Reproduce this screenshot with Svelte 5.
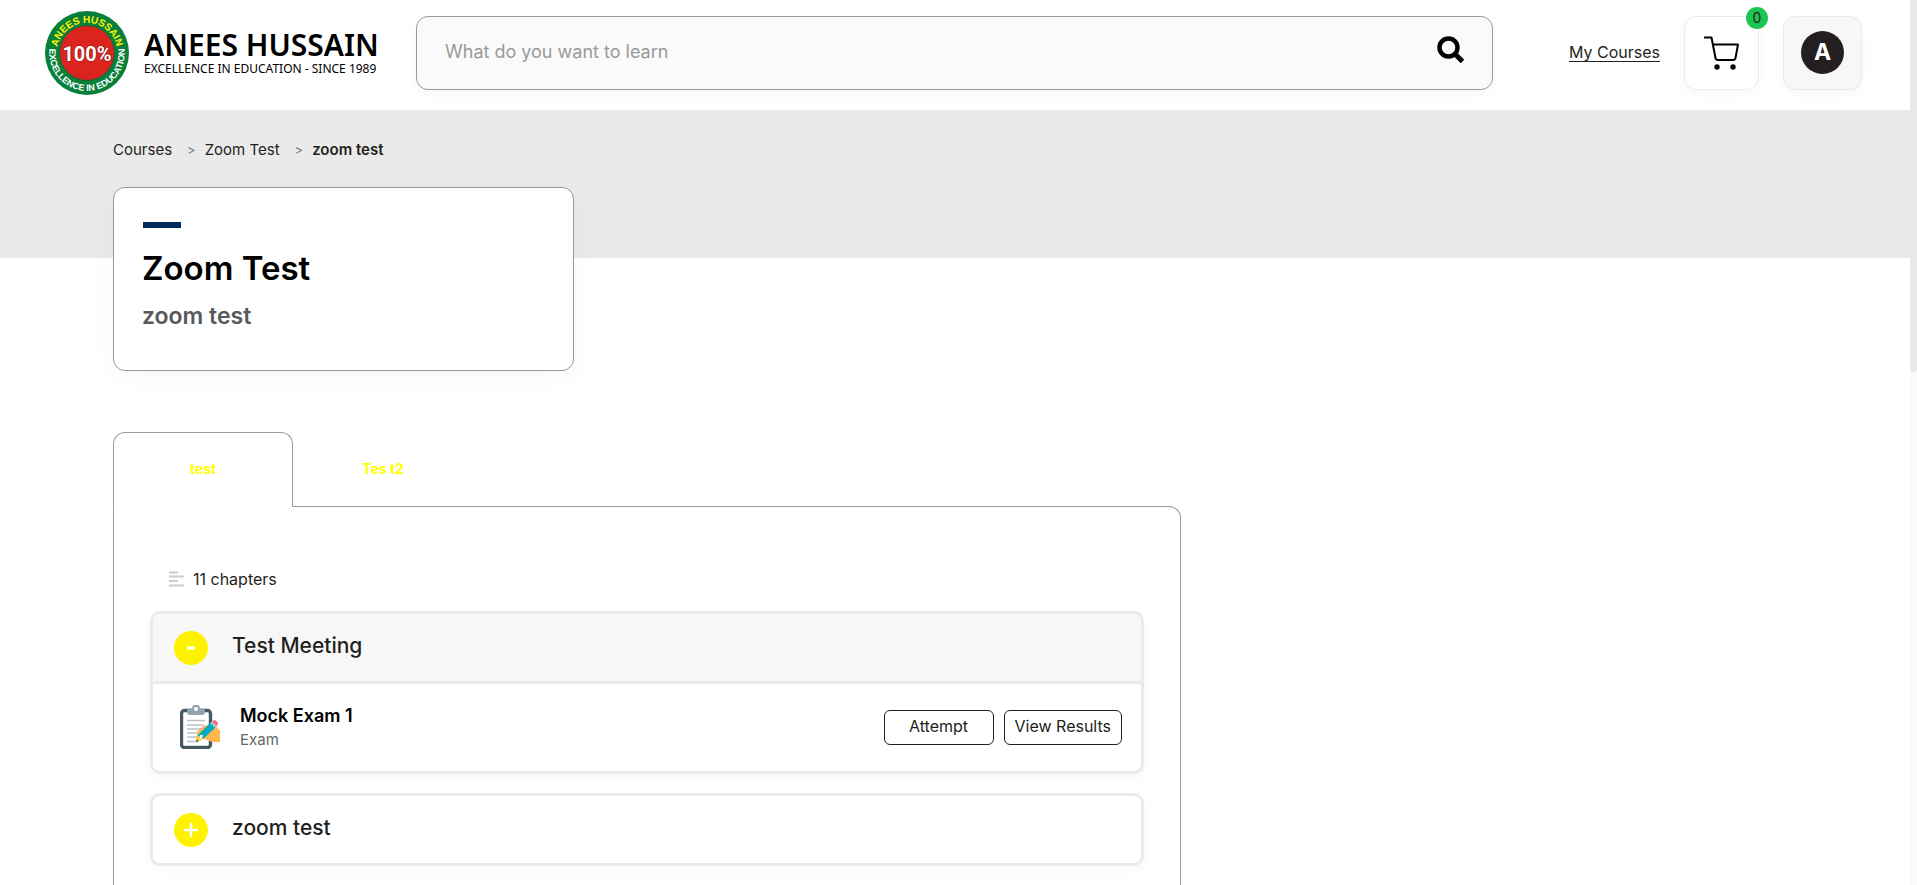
<script>
  let search = '';
  let cartCount = 0;
  let activeTab = 0;

  const tabs = ['test', 'Tes t2'];

  let chapters = [
    {
      title: 'Test Meeting',
      open: true,
      items: [{ name: 'Mock Exam 1', type: 'Exam' }]
    },
    { title: 'zoom test', open: false, items: [] }
  ];

  function toggleChapter(index) {
    chapters[index].open = !chapters[index].open;
  }
</script>

<div class="page">
  <header class="topbar">
    <a class="logo" href="/" aria-label="Anees Hussain home">
      <svg class="badge-logo" viewBox="0 0 84 84" aria-hidden="true">
        <defs>
          <path id="arc-top" d="M 12.8 49.8 A 30.2 30.2 0 1 1 71.2 49.8" />
          <path id="arc-bottom" d="M 5.2 34 A 37.7 37.7 0 1 0 78.8 34" />
        </defs>
        <circle cx="42" cy="42" r="42" fill="#08803a" />
        <circle cx="42" cy="42" r="27.5" fill="#dc241f" stroke="#0c6b33" />
        <text class="ring yellow"><textPath href="#arc-top" startOffset="50%" text-anchor="middle">ANEES HUSSAIN</textPath></text>
        <text class="ring white"><textPath href="#arc-bottom" startOffset="50%" text-anchor="middle">EXCELLENCE IN EDUCATION</textPath></text>
        <text class="percent" x="42" y="50" text-anchor="middle">100%</text>
      </svg>
      <span class="brand">
        <span class="brand-name">ANEES HUSSAIN</span>
        <span class="brand-line">EXCELLENCE IN EDUCATION - SINCE 1989</span>
      </span>
    </a>

    <form class="search" role="search" on:submit|preventDefault>
      <input type="text" placeholder="What do you want to learn" aria-label="Search courses" bind:value={search} />
      <button type="submit" aria-label="Search">
        <svg width="28" height="28" viewBox="0 0 28 28" fill="none" stroke="#000">
          <circle cx="12.5" cy="11.5" r="9" stroke-width="4.4" />
          <path d="M19 18 L26.5 25.5" stroke-width="5" />
        </svg>
      </button>
    </form>

    <nav class="actions">
      <a class="my-courses" href="/my-courses">My Courses</a>
      <a class="box cart" href="/cart" aria-label="Cart">
        <svg width="36" height="34" viewBox="0 0 36 34" fill="none" stroke="#000" stroke-width="2" stroke-linejoin="round">
          <path d="M0 1.5 H7.5 L11.5 22 Q12 24 14 24 H29 Q31 24 31.5 22 L34 8.5 H9" />
          <circle cx="13" cy="31" r="2.7" fill="#000" stroke="none" />
          <circle cx="29" cy="31" r="2.7" fill="#000" stroke="none" />
        </svg>
        <span class="count">{cartCount}</span>
      </a>
      <button class="box profile" aria-label="Profile menu"><span class="avatar">A</span></button>
    </nav>
  </header>

  <div class="hero">
    <nav class="breadcrumb" aria-label="Breadcrumb">
      <a href="/courses">Courses</a>
      <span class="sep">&gt;</span>
      <a href="/courses/zoom-test">Zoom Test</a>
      <span class="sep">&gt;</span>
      <strong>zoom test</strong>
    </nav>
  </div>

  <main>
    <section class="course-card">
      <div class="accent"></div>
      <h1>Zoom Test</h1>
      <h2>zoom test</h2>
    </section>

    <section class="course">
      <div class="tabs" role="tablist">
        {#each tabs as tab, i}
          <button role="tab" class="tab" class:active={activeTab === i} aria-selected={activeTab === i} on:click={() => (activeTab = i)}>{tab}</button>
        {/each}
      </div>

      <div class="panel">
        <p class="summary">
          <svg width="16" height="16" viewBox="0 0 16 16" stroke="#ccc" stroke-width="2" aria-hidden="true">
            <path d="M1 1.5 H10 M1 5.5 H16 M1 10 H10 M1 14.5 H16" />
          </svg>
          11 chapters
        </p>

        {#each chapters as chapter, index}
          <div class="chapter" class:open={chapter.open}>
            <button class="chapter-head" aria-expanded={chapter.open} on:click={() => toggleChapter(index)}>
              <span class="toggle">
                <svg width="14" height="14" viewBox="0 0 14 14" stroke="#fff" aria-hidden="true">
                  {#if chapter.open}
                    <path d="M3 7 H11" stroke-width="3" />
                  {:else}
                    <path d="M0 7 H14 M7 0 V14" stroke-width="2.4" />
                  {/if}
                </svg>
              </span>
              <span class="chapter-title">{chapter.title}</span>
            </button>
            {#if chapter.open}
              {#each chapter.items as item}
                <div class="lesson">
                  <svg class="exam-icon" width="40" height="44" viewBox="0 0 40 44" aria-hidden="true">
                    <rect x="1.5" y="5.5" width="29" height="37" rx="3" fill="#fff" stroke="#455a64" stroke-width="3.4" />
                    <path d="M7 3.5 H12 A4 4 0 0 1 20 3.5 H25 V7 Q25 10 22 10 H10 Q7 10 7 7 Z" fill="#90a4ae" />
                    <circle cx="16" cy="4" r="2" fill="#fff" />
                    <path d="M7 15.5 H25 M7 20 H24 M7 24 H22 M7 28 H20 M7 32 H18 M7 36.5 H18" stroke="#c0c0c0" stroke-width="1.7" />
                    <path d="M17 27 L24 20.5 H33 L36 21 L40 26 V37 H32 L22 33 L18 34 Z" fill="#ffb74d" />
                    <path d="M17 31 L30 18 L35.5 22.5 L23 34 Z" fill="#00acc1" />
                    <path d="M17 30.5 L23 33 L20 36 L16 37 Z" fill="#fbc02d" />
                    <path d="M16 37 L16.8 34.5 L18.5 36.3 Z" fill="#37474f" />
                    <path d="M20 30 H23 L22 33 L19 35 Z" fill="#fff3cd" />
                    <path d="M30 18 L32 16.5 L36.8 21 L35 22.8 Z" fill="#b0bec5" />
                    <path d="M32 16.5 L34 15 Q35 14.8 36 15.8 L37.8 17.8 Q38.4 19 37.5 20 L36.5 21 Z" fill="#ef6f7c" />
                  </svg>
                  <div class="lesson-text">
                    <h3>{item.name}</h3>
                    <p>{item.type}</p>
                  </div>
                  <div class="lesson-actions">
                    <button>Attempt</button>
                    <button>View Results</button>
                  </div>
                </div>
              {/each}
            {/if}
          </div>
        {/each}
      </div>
    </section>
  </main>

  <div class="scroll-track" aria-hidden="true"><div class="scroll-thumb"></div></div>
</div>

<style>
  :global(body) {
    background: #fff;
  }

  .page {
    min-height: 100vh;
    box-sizing: border-box;
    padding-right: 7px;
    font-family: Inter, "Liberation Sans", sans-serif;
    color: #231f20;
    display: flex;
    flex-direction: column;
  }

  .page :global(*) {
    box-sizing: border-box;
  }

  button,
  input {
    font: inherit;
    color: inherit;
  }

  button {
    cursor: pointer;
  }

  a {
    color: inherit;
    text-decoration: none;
  }

  h1,
  h2,
  h3,
  p {
    margin: 0;
  }

  .topbar {
    display: flex;
    align-items: center;
    height: 110px;
    padding: 0 48px 4px 45px;
    background: #fff;
  }

  .logo {
    display: flex;
    align-items: center;
    gap: 15px;
    width: 371px;
    flex: none;
    color: #000;
  }

  .badge-logo {
    width: 84px;
    height: 84px;
    flex: none;
  }

  .ring {
    font: bold 9px "Liberation Sans", sans-serif;
  }

  .yellow {
    fill: #fff200;
    font-size: 10px;
  }

  .white {
    fill: #fff;
  }

  .percent {
    font: bold 20px Roboto, sans-serif;
    fill: #fff;
    stroke: #7d1411;
    stroke-width: 1px;
    paint-order: stroke;
  }

  .brand {
    display: flex;
    flex-direction: column;
    white-space: nowrap;
  }

  .brand-name {
    font: 600 30px/32px "Noto Sans", sans-serif;
  }

  .brand-line {
    font: 12px/16px "Noto Sans", sans-serif;
  }

  .search {
    flex: 1;
    display: flex;
    align-items: center;
    height: 74px;
    padding: 0 28px;
    border: 1px solid #999;
    border-radius: 12px;
    background: #fafafa;
    box-shadow: 0 4px 12px rgba(0, 0, 0, 0.03);
  }

  .search input {
    flex: 1;
    min-width: 0;
    padding: 0 0 2px;
    border: 0;
    outline: 0;
    background: none;
    font-size: 18px;
    line-height: 24px;
  }

  .search input::placeholder {
    color: #999;
    opacity: 1;
  }

  .search button {
    display: flex;
    padding: 0 0 6px;
    border: 0;
    background: none;
  }

  .actions {
    display: flex;
    align-items: center;
    margin-left: 76px;
  }

  .my-courses {
    padding-bottom: 2px;
    font-size: 16px;
    line-height: 24px;
    text-decoration: underline;
    text-underline-offset: 3px;
    white-space: nowrap;
    margin-right: 24px;
  }

  .box {
    display: flex;
    align-items: center;
    justify-content: center;
    height: 74px;
    border: 1px solid #eaeaea;
    border-radius: 12px;
    box-shadow: 0 4px 12px rgba(0, 0, 0, 0.03);
  }

  .cart {
    position: relative;
    width: 75px;
    margin-right: 24px;
  }

  .count {
    position: absolute;
    top: -10px;
    right: -10px;
    width: 22px;
    height: 22px;
    border-radius: 50%;
    background: #1bc553;
    font-size: 14px;
    line-height: 22px;
    text-align: center;
  }

  .profile {
    width: 79px;
    padding: 0 0 2px;
    background: #f7f7f7;
  }

  .avatar {
    width: 43px;
    height: 43px;
    border-radius: 50%;
    background: #231f20;
    color: #fff;
    font-size: 23px;
    font-weight: 700;
    line-height: 43px;
  }

  .hero {
    height: 148px;
    padding: 28px 113px 0;
    background: #eaeaea;
  }

  .breadcrumb {
    display: flex;
    font-size: 15px;
    line-height: 24px;
  }

  .breadcrumb .sep {
    margin: 0 9px 0 15px;
    color: #6c757d;
    font-size: 13px;
  }

  .breadcrumb strong {
    font-weight: 600;
  }

  main {
    flex: 1;
    display: flex;
    flex-direction: column;
    padding: 0 113px;
    margin-top: -71px;
  }

  .course-card {
    width: 100%;
    max-width: 461px;
    height: 184px;
    padding: 34px 28px;
    border: 1px solid #999;
    border-radius: 12px;
    background: #fff;
    box-shadow: 0 4px 24px rgba(0, 0, 0, 0.04);
  }

  .accent {
    width: 38px;
    height: 6px;
    margin-left: 1px;
    background: #002b5c;
  }

  h1 {
    margin-top: 16px;
    color: #000;
    font-size: 33px;
    font-weight: 600;
    line-height: 48px;
  }

  h2 {
    margin-top: 8px;
    color: #58595b;
    font-size: 23px;
    font-weight: 600;
    line-height: 32px;
  }

  .course {
    flex: 1;
    display: flex;
    flex-direction: column;
    width: 100%;
    max-width: 1068px;
    margin-top: 61px;
  }

  .tabs {
    display: flex;
  }

  .tab {
    width: 180px;
    height: 75px;
    margin-bottom: -1px;
    padding: 0 0 2px;
    border: 1px solid transparent;
    border-radius: 12px 12px 0 0;
    background: none;
    color: #ff0;
    font-size: 14px;
    font-weight: 700;
  }

  .tab.active {
    border-color: #999;
    border-bottom-color: #fff;
    background: #fff;
    z-index: 1;
  }

  .panel {
    flex: 1;
    padding: 60px 36px 18px;
    border: 1px solid #999;
    border-bottom: 0;
    border-top-right-radius: 12px;
  }

  .summary {
    display: flex;
    align-items: center;
    gap: 9px;
    margin: 0 0 20px 18px;
    font-size: 16px;
    line-height: 24px;
  }

  .chapter {
    margin-bottom: 19px;
    border: 3px solid #eaeaea;
    border-radius: 10px;
    background: #fff;
    box-shadow: 0 4px 12px rgba(0, 0, 0, 0.03);
    overflow: hidden;
  }

  .chapter:last-child {
    margin-bottom: 0;
  }

  .chapter-head {
    display: flex;
    align-items: center;
    gap: 24px;
    width: 100%;
    height: 67px;
    padding: 0 21px;
    border: 0;
    background: none;
    font-size: 21px;
    font-weight: 500;
    text-align: left;
  }

  .chapter-title {
    padding-bottom: 4px;
  }

  .open .chapter-head {
    background: #f7f7f7;
  }

  .toggle {
    display: flex;
    align-items: center;
    justify-content: center;
    width: 34px;
    height: 34px;
    border-radius: 50%;
    background: #fff200;
  }

  .lesson {
    display: flex;
    align-items: center;
    height: 90px;
    padding: 0 19px 0 27px;
    border-top: 3px solid #eaeaea;
  }

  .exam-icon {
    margin-bottom: 2px;
  }

  .lesson-text {
    margin-left: 20px;
    flex: 1;
  }

  h3 {
    color: #000;
    font-size: 18px;
    font-weight: 600;
    line-height: 24px;
  }

  .lesson-text p {
    color: #666;
    font-size: 15px;
    line-height: 24px;
  }

  .lesson-actions {
    display: flex;
    gap: 10px;
  }

  .lesson-actions button {
    min-width: 110px;
    height: 35px;
    padding: 0 10px 4px;
    border: 1px solid #231f20;
    border-radius: 6px;
    background: #fff;
    font-size: 16px;
    line-height: 24px;
    white-space: nowrap;
  }

  .scroll-track {
    position: fixed;
    top: 0;
    right: 0;
    bottom: 0;
    width: 7px;
    background: #fafafa;
  }

  .scroll-thumb {
    height: 42%;
    border-radius: 0 0 4px 4px;
    background: #e8e8e8;
  }
</style>
